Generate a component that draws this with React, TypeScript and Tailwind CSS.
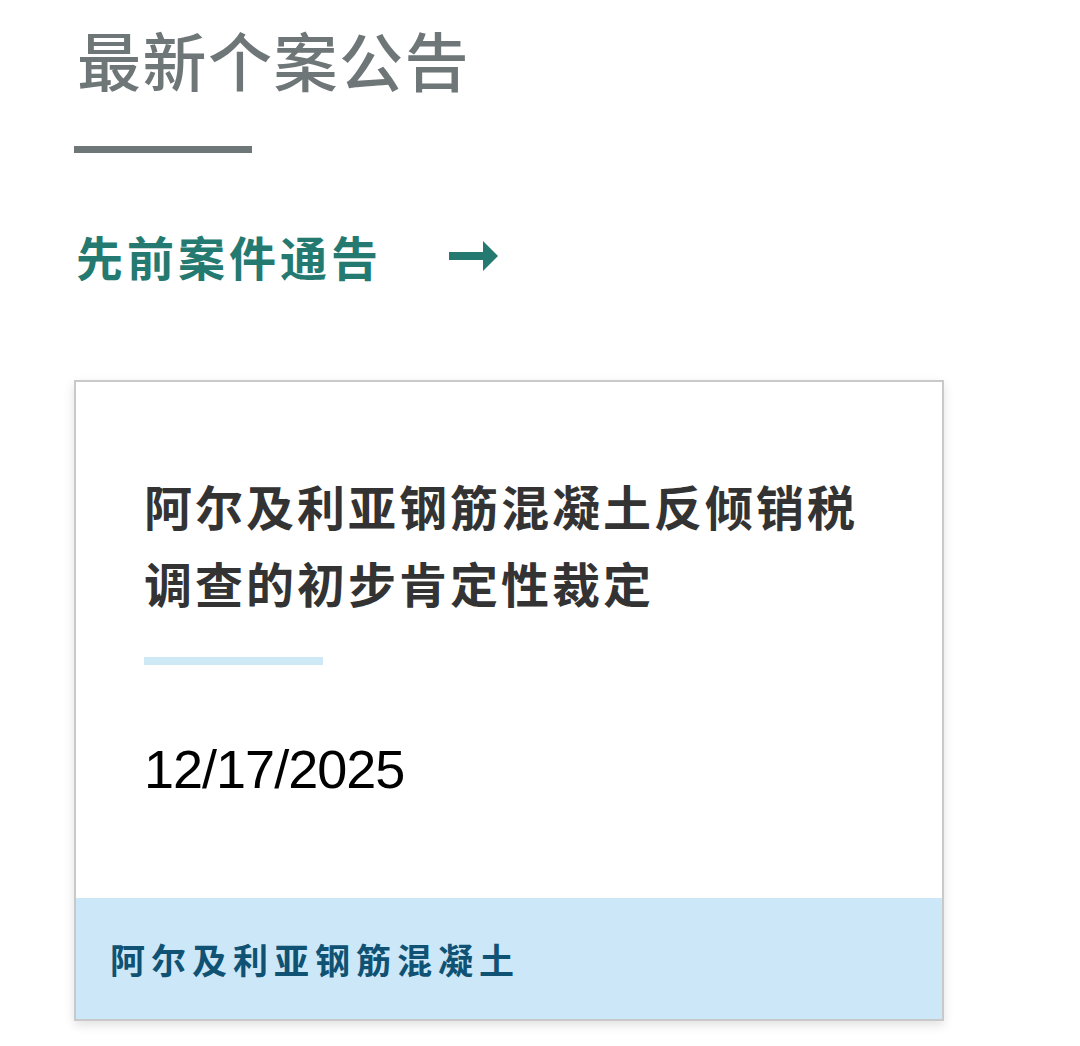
import React from 'react';

const cjk = { fontFamily: '"Noto Sans CJK SC", "Noto Sans", sans-serif' };

function ArrowRight() {
  return (
    <svg width="50" height="32" viewBox="0 0 50 32" className="block">
      <rect x="0" y="12" width="36" height="8" fill="#247a70" />
      <polygon points="34,1 49,16 34,31" fill="#247a70" />
    </svg>
  );
}

export default function App() {
  return (
    <div className="min-h-[1046px] w-[1080px] bg-white" style={cjk}>
      <div className="pl-[74px] pt-[22px]">
        <h2 className="text-[64px] leading-[72px] font-medium text-[#6f7678] pl-[3px] tracking-[1.5px]">
          最新个案公告
        </h2>
        <div className="mt-[52px] h-[7px] w-[178px] bg-[#6f7678]" />

        <a href="#" className="mt-[75px] flex items-center gap-[67px] pl-[2px] text-[#247a70]">
          <span className="text-[47px] leading-[56px] font-bold tracking-[4px]">先前案件通告</span>
          <ArrowRight />
        </a>

        <div className="mt-[96px] w-[870px] border-2 border-[#c9c9c9] bg-white shadow-[0_4px_10px_rgba(0,0,0,0.12)]">
          <div className="px-[68px] pt-[85px] pb-[99px]">
            <h3 className="text-[48px] leading-[77px] font-semibold text-[#333333] tracking-[3px]">
              阿尔及利亚钢筋混凝土反倾销税调查的初步肯定性裁定
            </h3>
            <div className="mt-[36px] h-[8px] w-[179px] bg-[#cfe8f6]" />
            <p
              className="mt-[74px] text-[54px] leading-[60px] text-black tracking-[-1px]"
              style={{ fontFamily: '"Liberation Sans", Arial, sans-serif' }}
            >
              12/17/2025
            </p>
          </div>
          <div className="bg-[#cce7f7] px-[34px] pt-[38px] pb-[37px]">
            <span className="text-[35px] leading-[46px] font-bold text-[#0f5273] tracking-[6px]">
              阿尔及利亚钢筋混凝土
            </span>
          </div>
        </div>
      </div>
    </div>
  );
}
